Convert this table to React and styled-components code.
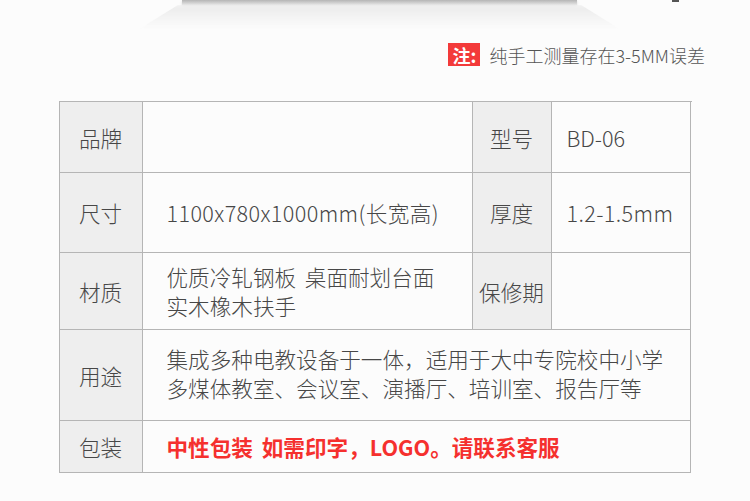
import styled, { createGlobalStyle } from "styled-components";

const GlobalStyle = createGlobalStyle`
  html, body {
    margin: 0;
    padding: 0;
    background: #fcfcfc;
  }
  body {
    font-family: "Noto Sans CJK SC", "Noto Sans", sans-serif;
    color: #444;
  }
`;

const Page = styled.div`
  width: 750px;
  height: 501px;
  overflow: hidden;
  position: relative;
  display: flex;
  flex-direction: column;
`;

const Hero = styled.div`
  height: 30px;
  display: flex;
  flex-direction: column;
  align-items: center;
`;

const ProductBase = styled.div`
  width: 395px;
  height: 5px;
  margin-left: 9px;
  background: linear-gradient(to bottom, #b5b5b5, #d2d2d2 60%, #e8e8e8);
  box-shadow: 0 1px 3px rgba(0, 0, 0, 0.12);
`;

const ProductShadow = styled.div`
  width: 480px;
  height: 24px;
  margin-left: 9px;
  background: linear-gradient(to bottom, #ebebeb, #f5f5f5 60%, #fcfcfc);
  clip-path: polygon(8% 0, 92% 0, 100% 100%, 0 100%);
  filter: blur(2px);
`;

const Mark = styled.div`
  position: absolute;
  left: 672px;
  top: 0;
  width: 7px;
  height: 2px;
  background: #555;
`;

const Note = styled.div`
  display: flex;
  justify-content: flex-end;
  align-items: center;
  gap: 9px;
  padding-right: 45px;
  margin-top: 13px;
  height: 23px;
`;

const NoteBadge = styled.span`
  display: inline-flex;
  align-items: center;
  justify-content: center;
  width: 32px;
  height: 23px;
  background: #f33a3a;
  color: #fff;
  font-weight: 700;
  font-size: 18px;
  line-height: 1;
`;

const NoteText = styled.span`
  font-size: 18px;
  font-weight: 300;
  color: #555;
  line-height: 1;
`;

const Table = styled.div`
  margin: 35px auto 0;
  width: 632px;
  display: grid;
  grid-template-columns: 83px 330px 79px 139px;
  grid-template-rows: 71px 80px 77px 91px 52px;
  border-top: 1px solid #b5b5b5;
  border-left: 1px solid #b5b5b5;
`;

const Cell = styled.div`
  border-right: 1px solid #b5b5b5;
  border-bottom: 1px solid #b5b5b5;
  display: flex;
  align-items: center;
  font-size: 21.6px;
  font-weight: 300;
  line-height: 29px;
  color: #474747;
  grid-column: ${(p) => (p.$wide ? "2 / 5" : "auto")};
`;

const Label = styled(Cell)`
  background: #eeeeee;
  justify-content: center;
  text-align: center;
`;

const Value = styled(Cell)`
  padding-left: ${(p) => (p.$narrow ? "15px" : "24px")};
  padding-bottom: ${(p) => (p.$lift ? "4px" : "0")};
  word-spacing: 4px;
  letter-spacing: ${(p) => (p.$spaced ? "0.4px" : "0")};
  color: ${(p) => (p.$red ? "#f5302e" : "#474747")};
  font-weight: ${(p) => (p.$red ? 700 : 300)};
`;

export default function App() {
  return (
    <Page>
      <GlobalStyle />
      <Hero>
        <ProductBase />
        <ProductShadow />
      </Hero>
      <Mark />
      <Note>
        <NoteBadge>注:</NoteBadge>
        <NoteText>纯手工测量存在3-5MM误差</NoteText>
      </Note>
      <Table>
        <Label>品牌</Label>
        <Value></Value>
        <Label>型号</Label>
        <Value $narrow>BD-06</Value>

        <Label>尺寸</Label>
        <Value $spaced>1100x780x1000mm(长宽高)</Value>
        <Label>厚度</Label>
        <Value $narrow $spaced>1.2-1.5mm</Value>

        <Label>材质</Label>
        <Value>
          优质冷轧钢板 桌面耐划台面
          <br />
          实木橡木扶手
        </Value>
        <Label>保修期</Label>
        <Value $narrow></Value>

        <Label>用途</Label>
        <Value $wide $lift>
          集成多种电教设备于一体，适用于大中专院校中小学
          <br />
          多煤体教室、会议室、演播厅、培训室、报告厅等
        </Value>

        <Label>包装</Label>
        <Value $wide $red>
          中性包装 如需印字，LOGO。请联系客服
        </Value>
      </Table>
    </Page>
  );
}
